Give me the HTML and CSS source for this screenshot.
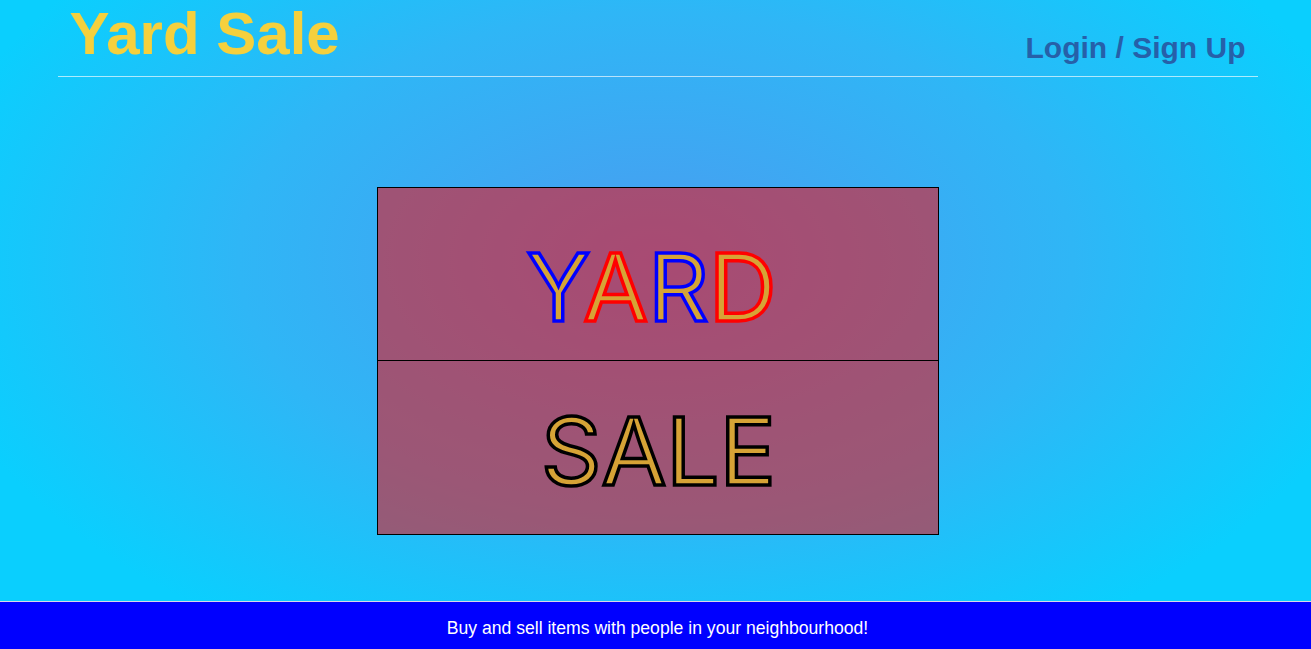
FILE: index.html
```html
<!DOCTYPE html>
<html lang="en">
<head>
<meta charset="utf-8">
<title>Yard Sale</title>
<link rel="stylesheet" href="styles.css">
</head>
<body>
<div class="page">
  <header class="site-header">
    <h1 class="brand">Yard Sale</h1>
    <a class="auth-link" href="#">Login / Sign Up</a>
  </header>
  <main class="main">
    <div class="sign">
      <div class="sign-row sign-row--top">
        <span class="word"><span class="stroke-blue">Y</span><span class="stroke-red">A</span><span class="stroke-blue">R</span><span class="stroke-red">D</span></span>
      </div>
      <div class="sign-row sign-row--bottom">
        <span class="word stroke-black">SALE</span>
      </div>
    </div>
  </main>
  <footer class="site-footer">Buy and sell items with people in your neighbourhood!</footer>
</div>
</body>
</html>
```

FILE: styles.css
```css
html, body {
  margin: 0;
  padding: 0;
  height: 100%;
}

body {
  font-family: "Liberation Sans", Arial, sans-serif;
  background: radial-gradient(ellipse at 50% 40%, #4a9cf0 0%, #2fb6f6 45%, #0acffe 80%);
  overflow: hidden;
}

.page {
  min-height: 100vh;
  display: flex;
  flex-direction: column;
}

.site-header {
  width: 1200px;
  margin: 0 auto;
  height: 77px;
  box-sizing: border-box;
  border-bottom: 1px solid rgba(255, 255, 255, 0.65);
  display: flex;
  justify-content: space-between;
  align-items: flex-start;
  transform: translateX(2px);
}

.brand {
  margin: 0;
  padding: 4px 0 0 12px;
  font-size: 60px;
  line-height: 1;
  font-weight: bold;
  color: #f5d03d;
}

.auth-link {
  padding: 33px 12px 0 0;
  font-size: 30px;
  line-height: 1;
  font-weight: bold;
  color: #2660a9;
  text-decoration: none;
}

.main {
  flex: 1;
  display: flex;
  justify-content: center;
  align-items: flex-start;
  padding-top: 110px;
}

.sign {
  width: 562px;
  box-sizing: border-box;
  border: 1px solid #000;
  background: rgba(255, 0, 0, 0.52);
  transform: translateX(2px);
}

.sign-row {
  box-sizing: border-box;
  text-align: center;
}

.sign-row--top {
  height: 173px;
  border-bottom: 1px solid #000;
  padding: 49px 12px 0 0;
}

.sign-row--bottom {
  height: 173px;
  padding: 40px 0 0 2px;
}

.word {
  font-family: Inter, "Liberation Sans", sans-serif;
  font-size: 94px;
  line-height: 100px;
  font-weight: 400;
  color: #d6a336;
  -webkit-text-stroke-width: 3.5px;
}

.stroke-blue { -webkit-text-stroke-color: #0000ff; }
.stroke-red { -webkit-text-stroke-color: #ff0000; }
.stroke-black { -webkit-text-stroke-color: #000; }

.site-footer {
  height: 48px;
  box-sizing: border-box;
  border-top: 1px solid #d8d8e8;
  background: #0000ff;
  color: #fff;
  font-size: 17.6px;
  text-align: center;
  line-height: 52px;
  padding-left: 4px;
}
```
